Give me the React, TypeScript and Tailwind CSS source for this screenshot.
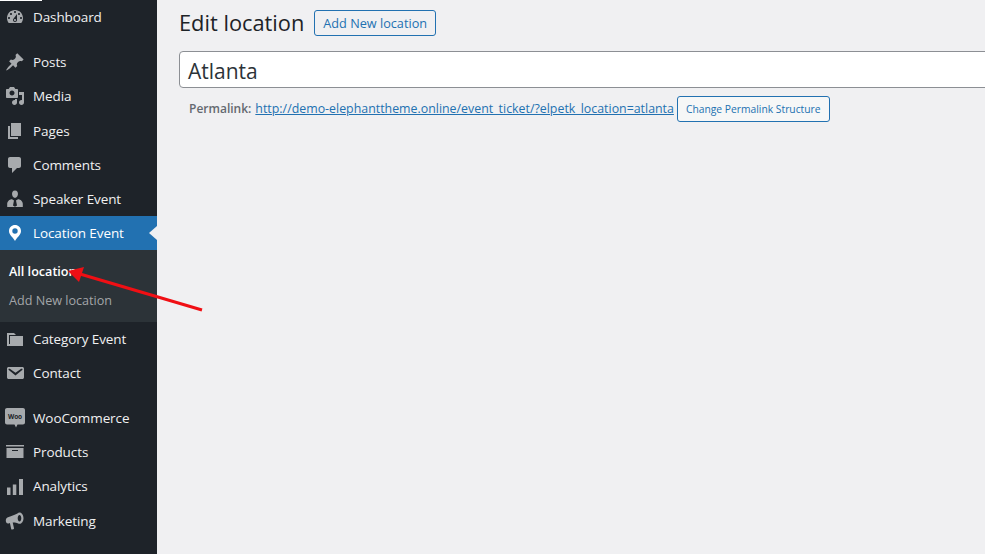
const font = "font-['Open_Sans','Noto_Sans',sans-serif]";

function Dash({ d }: { d: string }) {
  return (
    <svg viewBox="0 0 20 20" className="w-[20px] h-[20px] fill-current" fillRule="evenodd">
      <path d={d} />
    </svg>
  );
}

const icons = {
  dashboard:
    "M3.76 16h12.48c1.1-1.37 1.76-3.11 1.76-5 0-4.42-3.58-8-8-8s-8 3.58-8 8c0 1.89.66 3.63 1.76 5zM10 4c.55 0 1 .45 1 1s-.45 1-1 1-1-.45-1-1 .45-1 1-1zM6 6c.55 0 1 .45 1 1s-.45 1-1 1-1-.45-1-1 .45-1 1-1zm8 0c.55 0 1 .45 1 1s-.45 1-1 1-1-.45-1-1 .45-1 1-1zm-5.37 5.55L12 7v6c0 1.1-.9 2-2 2s-2-.9-2-2c0-.57.24-1.08.63-1.45zM4 10c.55 0 1 .45 1 1s-.45 1-1 1-1-.45-1-1 .45-1 1-1zm12 0c.55 0 1 .45 1 1s-.45 1-1 1-1-.45-1-1 .45-1 1-1zm-5 3c0-.55-.45-1-1-1s-1 .45-1 1 .45 1 1 1 1-.45 1-1z",
  pin: "M10.44 3.02l1.82-1.82 6.36 6.35-1.83 1.82c-1.05-.68-2.48-.57-3.41.36l-.75.75c-.92.93-1.04 2.35-.35 3.41l-1.83 1.82-2.41-2.41-2.8 2.79c-.42.42-3.38 2.71-3.8 2.29s1.86-3.39 2.28-3.81l2.79-2.79L4.1 9.36l1.83-1.82c1.05.69 2.48.57 3.4-.36l.75-.75c.93-.92 1.05-2.35.36-3.41z",
  media:
    "M13 11V4c0-.55-.45-1-1-1h-1.67L9 1H5L3.67 3H2c-.55 0-1 .45-1 1v7c0 .55.45 1 1 1h10c.55 0 1-.45 1-1zM7 4.5c1.38 0 2.5 1.12 2.5 2.5S8.38 9.5 7 9.5 4.5 8.38 4.5 7 5.62 4.5 7 4.5zM14 6h5v10.5c0 1.38-1.12 2.5-2.5 2.5S14 17.88 14 16.5s1.12-2.5 2.5-2.5c.17 0 .34.02.5.05V9h-3V6zm-4 8.05V13h2v3.5c0 1.38-1.12 2.5-2.5 2.5S7 17.88 7 16.5 8.12 14 9.5 14c.17 0 .34.02.5.05z",
  page: "M6 15V2h10v13H6zm-1 1h8v2H3V5h2v11z",
  comment:
    "M5 2h9c1.1 0 2 .9 2 2v7c0 1.1-.9 2-2 2h-2l-5 5v-5H5c-1.1 0-2-.9-2-2V4c0-1.1.9-2 2-2z",
  // person with a tie, as the reference draws it
  users:
    "M10 1.500c-2.300 0-3.200 2-2.900 3.900 0 0 .5 3.400 2.900 3.400s2.900-3.400 2.900-3.400c.3-1.900-.6-3.900-2.900-3.900zM7 10.200c-2.700 0-4.800 2.300-4.800 4.700V18h15.600v-3.100c0-2.400-2.100-4.700-4.800-4.700l-2 1.200 1 5-2 1.300-2-1.300 1-5z",
  location:
    "M10 2C6.7 2 4 4.600 4 7.900c0 4.100 4.200 6.200 6 10.100 1.800-3.900 6-6 6-10.100C16 4.600 13.300 2 10 2zm0 3.300a2.700 2.700 0 1 1 0 5.400 2.700 2.700 0 0 1 0-5.400z",
  category: "M5 7h13v10H2V4h7l2 2H4v9h1V7z",
  email:
    "M3.87 4h13.25C18.37 4 19 4.59 19 5.79v8.42c0 1.19-.63 1.79-1.88 1.79H3.87c-1.25 0-1.88-.6-1.88-1.79V5.79c0-1.2.63-1.79 1.88-1.79zm6.62 8.6l6.74-5.53c.24-.2.43-.66.13-1.07-.29-.41-.82-.42-1.17-.17l-5.7 3.86L4.8 5.83c-.35-.25-.88-.24-1.17.17-.3.41-.11.87.13 1.07z",
  archive: "M19 3v1.500H1V3h18zM1.500 6h17v10h-17V6zm11.500 3V8H7v1h6z",
  chart: "M2 10.500h3.500V18H2v-7.500zm5.800-3h3.500V18H7.800V7.500zM14 2h4v16h-4V2z",
  megaphone:
    "M14.500 1.500c2.200 0 4 2.700 4 5.700s-1.800 5.600-4 5.600c-.5 0-1-.2-1.400-.4-2-1-4-1.100-5.400-.9l1.300 5.800c.1.500-.2.900-.7 1l-1.200.2c-.4.1-.8-.2-.9-.6l-1.300-5.800-1.200.3C1.400 12.800.8 11 .8 9.500s.8-2.800 1.600-3.100c3.600-1 7.400-2.500 10-3.900.6-.6 1.300-1 2.100-1zm0 2.500c-1 0-1.800 1.400-1.800 3.200s.8 3.200 1.800 3.200 1.800-1.400 1.800-3.200S15.500 4 14.500 4z",
};

function WooIcon() {
  return (
    <svg viewBox="0 0 20 20" className="w-[20px] h-[20px]">
      <path
        className="fill-current"
        d="M2 0h16c1.100 0 2 .9 2 2v12.500c0 1.100-.9 2-2 2h-5.500L11 19.500l-1.500-3H2c-1.100 0-2-.9-2-2V2C0 .9.900 0 2 0z"
      />
      <text x="10" y="10.500" textAnchor="middle" fontSize="6.500" fontWeight="700" fill="#1d2327">
        Woo
      </text>
    </svg>
  );
}

function MenuRow({ label, icon, children }: { label: string; icon?: string; children?: React.ReactNode }) {
  return (
    <a className="flex items-center h-[34.2px] text-[#f0f0f1] text-[13.5px] tracking-[-0.1px]">
      <span className="w-[33px] pl-[5px] shrink-0 text-[#a7aaad]">{children ?? <Dash d={icon!} />}</span>
      <span>{label}</span>
    </a>
  );
}

function Sidebar() {
  return (
    <aside className="relative w-[157px] shrink-0 bg-[#1e2329]">
      <div className="absolute top-0 left-0 w-[42px] h-px bg-white" />
      <MenuRow label="Dashboard" icon={icons.dashboard} />
      <div className="h-[11px]" />
      <MenuRow label="Posts" icon={icons.pin} />
      <MenuRow label="Media" icon={icons.media} />
      <MenuRow label="Pages" icon={icons.page} />
      <MenuRow label="Comments" icon={icons.comment} />
      <MenuRow label="Speaker Event" icon={icons.users} />

      {/* current item */}
      <div className="relative flex items-center h-[34px] bg-[#2271b1] text-white text-[13.5px] tracking-[-0.1px]">
        <span className="w-[33px] pl-[5px] shrink-0">
          <Dash d={icons.location} />
        </span>
        <span>Location Event</span>
        <div className="absolute right-0 top-[10px] border-y-[7px] border-r-[8px] border-y-transparent border-r-[#f0f0f2]" />
      </div>
      <div className="h-[72px] bg-[#2c3338] pt-[8px] text-[12.6px]">
        <div className="h-[29px] flex items-center pl-[9px] font-semibold text-white">All location</div>
        <div className="h-[29px] flex items-center pl-[9px] text-[#c3c4c7]/80">Add New location</div>
      </div>

      <MenuRow label="Category Event" icon={icons.category} />
      <MenuRow label="Contact" icon={icons.email} />
      <div className="h-[10.6px]" />
      <MenuRow label="WooCommerce">
        <WooIcon />
      </MenuRow>
      <MenuRow label="Products" icon={icons.archive} />
      <MenuRow label="Analytics" icon={icons.chart} />
      <MenuRow label="Marketing" icon={icons.megaphone} />
    </aside>
  );
}

export default function App() {
  return (
    <div className={`relative flex h-[554px] overflow-hidden bg-[#f0f0f2] ${font}`}>
      <Sidebar />
      <main className="flex-1 min-w-0 overflow-hidden pl-[22px] pt-[10px]">
        <div className="flex items-center gap-[10px] h-[26px]">
          <h1 className="text-[21.8px] text-[#1d2327] leading-[25px] pb-[1px]">Edit location</h1>
          <a className="h-[26px] px-[8px] pt-[1px] flex items-center rounded-[3px] border border-[#2271b1] text-[#2271b1] text-[12.7px] font-medium">
            Add New location
          </a>
        </div>
        <div className="mt-[15px] w-[900px] h-[37px] flex items-center pl-[8px] pt-[5px] bg-white border border-[#8c8f94] rounded-[4px] text-[21px] text-[#2c3338]">
          Atlanta
        </div>
        <div className="mt-[8px] pl-[10px] flex items-center h-[26px] text-[12.38px] whitespace-nowrap">
          <strong className="font-semibold text-[12px] text-[#646970] mr-[4px]">Permalink:</strong>
          <a className="text-[#2271b1] underline">http://demo-elephanttheme.online/event_ticket/?elpetk_location=atlanta</a>
          <a className="ml-[3px] h-[26px] px-[8px] pt-[1px] flex items-center rounded-[3px] border border-[#2271b1] text-[#2271b1] text-[10.3px] bg-[#f6f7f7]">
            Change Permalink Structure
          </a>
        </div>
      </main>

      {/* annotation arrow */}
      <svg className="absolute left-0 top-0 pointer-events-none" width="985" height="554">
        <line x1="202" y1="310" x2="80" y2="274" stroke="#f00f14" strokeWidth="3" />
        <polygon points="68,271 84,267 79,282" fill="#f00f14" />
      </svg>
    </div>
  );
}
